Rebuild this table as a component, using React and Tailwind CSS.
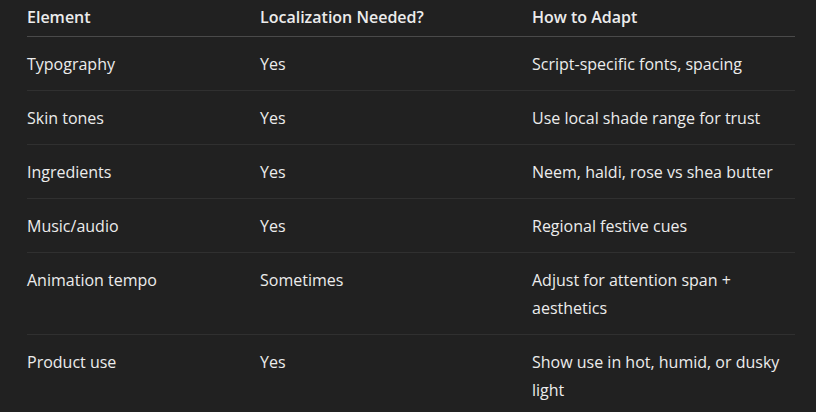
const rows = [
  ["Typography", "Yes", ["Script-specific fonts, spacing"]],
  ["Skin tones", "Yes", ["Use local shade range for trust"]],
  ["Ingredients", "Yes", ["Neem, haldi, rose vs shea butter"]],
  ["Music/audio", "Yes", ["Regional festive cues"]],
  ["Animation tempo", "Sometimes", ["Adjust for attention span +", "aesthetics"]],
  ["Product use", "Yes", ["Show use in hot, humid, or dusky", "light"]],
];

export default function App() {
  return (
    <div
      className="h-[412px] w-[816px] overflow-hidden bg-[#212121] pl-[27px] text-[16px] leading-7 text-[#ececec]"
      style={{ fontFamily: '"Open Sans", "Noto Sans", sans-serif' }}
    >
      <div className="w-[768px]">
        <div className="grid grid-cols-[233px_272px_263px] border-b border-[#4a4a4a] pt-[3px] pb-[5px] font-semibold">
          <div>Element</div>
          <div>Localization Needed?</div>
          <div>How to Adapt</div>
        </div>
        {rows.map(([el, need, how], i) => (
          <div
            key={el}
            className={`grid grid-cols-[233px_272px_263px] pt-[13px] pb-[12px] ${
              i < rows.length - 1 ? "border-b border-[#303030]" : ""
            }`}
          >
            <div>{el}</div>
            <div>{need}</div>
            <div>
              {how.map((line) => (
                <div key={line}>{line}</div>
              ))}
            </div>
          </div>
        ))}
      </div>
    </div>
  );
}
